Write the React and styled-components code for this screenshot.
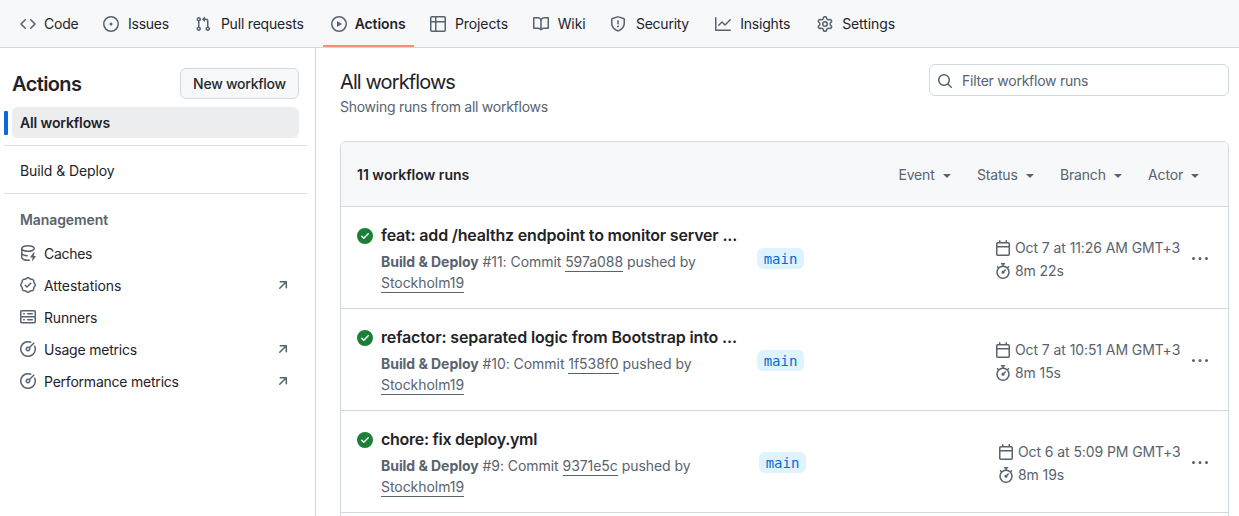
import React from 'react';
import styled, { createGlobalStyle } from 'styled-components';

const color = {
  fg: '#1f2328',
  muted: '#59636e',
  border: '#d1d9e0',
  subtle: '#f6f8fa',
  accent: '#0969da',
  success: '#1a7f37',
};

const paths = {
  code: 'm11.28 3.22 4.25 4.25a.75.75 0 0 1 0 1.06l-4.25 4.25a.749.749 0 0 1-1.275-.326.749.749 0 0 1 .215-.734L13.94 8l-3.72-3.72a.749.749 0 0 1 .326-1.275.749.749 0 0 1 .734.215Zm-6.56 0a.751.751 0 0 1 1.042.018.751.751 0 0 1 .018 1.042L2.06 8l3.72 3.72a.749.749 0 0 1-.326 1.275.749.749 0 0 1-.734-.215L.47 8.53a.75.75 0 0 1 0-1.06Z',
  issue: 'M8 9.5a1.5 1.5 0 1 0 0-3 1.5 1.5 0 0 0 0 3ZM8 0a8 8 0 1 1 0 16A8 8 0 0 1 8 0ZM1.5 8a6.5 6.5 0 1 0 13 0 6.5 6.5 0 0 0-13 0Z',
  pull: 'M1.5 3.25a2.25 2.25 0 1 1 3 2.122v5.256a2.251 2.251 0 1 1-1.5 0V5.372A2.25 2.25 0 0 1 1.5 3.25Zm5.677-.177L9.573.677A.25.25 0 0 1 10 .854V2.5h1A2.5 2.5 0 0 1 13.5 5v5.628a2.251 2.251 0 1 1-1.5 0V5a1 1 0 0 0-1-1h-1v1.646a.25.25 0 0 1-.427.177L7.177 3.427a.25.25 0 0 1 0-.354ZM3.75 2.5a.75.75 0 1 0 0 1.5.75.75 0 0 0 0-1.5Zm0 9.5a.75.75 0 1 0 0 1.5.75.75 0 0 0 0-1.5Zm8.25.75a.75.75 0 1 0 1.5 0 .75.75 0 0 0-1.5 0Z',
  play: 'M8 0a8 8 0 1 1 0 16A8 8 0 0 1 8 0ZM1.5 8a6.5 6.5 0 1 0 13 0 6.5 6.5 0 0 0-13 0Zm4.879-2.773 4.264 2.559a.25.25 0 0 1 0 .428l-4.264 2.559A.25.25 0 0 1 6 10.559V5.442a.25.25 0 0 1 .379-.215Z',
  table: 'M0 1.75C0 .784.784 0 1.75 0h12.5C15.216 0 16 .784 16 1.75v12.5A1.75 1.75 0 0 1 14.25 16H1.75A1.75 1.75 0 0 1 0 14.25ZM6.5 6.5v8h7.75a.25.25 0 0 0 .25-.25V6.5Zm8-1.5V1.75a.25.25 0 0 0-.25-.25H6.5V5Zm-13 1.5v7.75c0 .138.112.25.25.25H5v-8ZM5 5V1.5H1.75a.25.25 0 0 0-.25.25V5Z',
  book: 'M0 1.75A.75.75 0 0 1 .75 1h4.253c1.227 0 2.317.59 3 1.501A3.743 3.743 0 0 1 11.006 1h4.245a.75.75 0 0 1 .75.75v10.5a.75.75 0 0 1-.75.75h-4.507a2.25 2.25 0 0 0-1.591.659l-.622.621a.75.75 0 0 1-1.06 0l-.622-.621A2.25 2.25 0 0 0 5.258 13H.75a.75.75 0 0 1-.75-.75Zm7.251 10.324.004-5.073-.002-2.253A2.25 2.25 0 0 0 5.003 2.5H1.5v9h3.757a3.75 3.75 0 0 1 1.994.574ZM8.755 4.75l-.004 7.322a3.752 3.752 0 0 1 1.992-.572H14.5v-9h-3.495a2.25 2.25 0 0 0-2.25 2.25Z',
  shield: 'M7.467.133a1.748 1.748 0 0 1 1.066 0l5.25 1.68A1.75 1.75 0 0 1 15 3.48V7c0 1.566-.32 3.182-1.303 4.682-.983 1.498-2.585 2.813-5.032 3.855a1.697 1.697 0 0 1-1.33 0c-2.447-1.042-4.049-2.357-5.032-3.855C1.32 10.182 1 8.566 1 7V3.48a1.755 1.755 0 0 1 1.217-1.667Zm.61 1.429a.25.25 0 0 0-.153 0l-5.25 1.68a.25.25 0 0 0-.174.238V7c0 1.358.275 2.666 1.057 3.86.784 1.194 2.121 2.34 4.366 3.297a.196.196 0 0 0 .154 0c2.245-.956 3.582-2.104 4.366-3.298C13.225 9.666 13.5 8.36 13.5 7V3.48a.251.251 0 0 0-.174-.237l-5.25-1.68ZM8.75 4.75v3a.75.75 0 0 1-1.5 0v-3a.75.75 0 0 1 1.5 0ZM9 10.5a1 1 0 1 1-2 0 1 1 0 0 1 2 0Z',
  graph: 'M1.5 1.75V13.5h13.75a.75.75 0 0 1 0 1.5H.75a.75.75 0 0 1-.75-.75V1.75a.75.75 0 0 1 1.5 0Zm14.28 2.53-5.25 5.25a.75.75 0 0 1-1.06 0L7 7.06 4.28 9.78a.751.751 0 0 1-1.042-.018.751.751 0 0 1-.018-1.042l3.25-3.25a.75.75 0 0 1 1.06 0L10 7.94l4.72-4.72a.751.751 0 0 1 1.042.018.751.751 0 0 1 .018 1.042Z',
  gear: 'M8 0a8.2 8.2 0 0 1 .701.031C9.444.095 9.99.645 10.16 1.29l.288 1.107c.018.066.079.158.212.224.231.114.454.243.668.386.123.082.233.09.299.071l1.103-.303c.644-.176 1.392.021 1.82.63.27.385.506.792.704 1.218.315.675.111 1.422-.364 1.891l-.814.806c-.049.048-.098.147-.088.294.016.257.016.515 0 .772-.01.147.038.246.088.294l.814.806c.475.469.679 1.216.364 1.891a7.977 7.977 0 0 1-.704 1.217c-.428.61-1.176.807-1.82.63l-1.102-.302c-.067-.019-.177-.011-.3.071a5.909 5.909 0 0 1-.668.386c-.133.066-.194.158-.211.224l-.29 1.106c-.168.646-.715 1.196-1.458 1.26a8.006 8.006 0 0 1-1.402 0c-.743-.064-1.289-.614-1.458-1.26l-.289-1.106c-.018-.066-.079-.158-.212-.224a5.738 5.738 0 0 1-.668-.386c-.123-.082-.233-.09-.299-.071l-1.103.303c-.644.176-1.392-.021-1.82-.63a8.12 8.12 0 0 1-.704-1.218c-.315-.675-.111-1.422.363-1.891l.815-.806c.05-.048.098-.147.088-.294a6.214 6.214 0 0 1 0-.772c.01-.147-.038-.246-.088-.294l-.815-.806C.635 6.045.431 5.298.746 4.623a7.92 7.92 0 0 1 .704-1.217c.428-.61 1.176-.807 1.82-.63l1.102.302c.067.019.177.011.3-.071.214-.143.437-.272.668-.386.133-.066.194-.158.211-.224l.29-1.106C6.009.645 6.556.095 7.299.03 7.53.01 7.764 0 8 0Zm-.571 1.525c-.036.003-.108.036-.137.146l-.289 1.105c-.147.561-.549.967-.998 1.189-.173.086-.34.183-.5.29-.417.278-.97.423-1.529.27l-1.103-.303c-.109-.03-.175.016-.195.045-.22.312-.412.644-.573.99-.014.031-.021.11.059.19l.815.806c.411.406.562.957.53 1.456a4.709 4.709 0 0 0 0 .582c.032.499-.119 1.05-.53 1.456l-.815.806c-.081.08-.073.159-.059.19.162.346.353.677.573.989.02.03.085.076.195.046l1.102-.303c.56-.153 1.113-.008 1.53.27.161.107.328.204.501.29.447.222.85.629.997 1.189l.289 1.105c.029.109.101.143.137.146a6.6 6.6 0 0 0 1.142 0c.036-.003.108-.036.137-.146l.289-1.105c.147-.561.549-.967.998-1.189.173-.086.34-.183.5-.29.417-.278.97-.423 1.529-.27l1.103.303c.109.029.175-.016.195-.045.22-.313.411-.644.573-.99.014-.031.021-.11-.059-.19l-.815-.806c-.411-.406-.562-.957-.53-1.456a4.709 4.709 0 0 0 0-.582c-.032-.499.119-1.05.53-1.456l.815-.806c.081-.08.073-.159.059-.19a6.464 6.464 0 0 0-.573-.989c-.02-.03-.085-.076-.195-.046l-1.102.303c-.56.153-1.113.008-1.53-.27a4.44 4.44 0 0 0-.501-.29c-.447-.222-.85-.629-.997-1.189l-.289-1.105c-.029-.11-.101-.143-.137-.146a6.6 6.6 0 0 0-1.142 0ZM11 8a3 3 0 1 1-6 0 3 3 0 0 1 6 0ZM9.5 8a1.5 1.5 0 1 0-3.001.001A1.5 1.5 0 0 0 9.5 8Z',
  search: 'M10.68 11.74a6 6 0 0 1-7.922-8.982 6 6 0 0 1 8.982 7.922l3.04 3.04a.749.749 0 0 1-.326 1.275.749.749 0 0 1-.734-.215ZM11.5 7a4.499 4.499 0 1 0-8.997 0A4.499 4.499 0 0 0 11.5 7Z',
  caret: 'm4.427 7.427 3.396 3.396a.25.25 0 0 0 .354 0l3.396-3.396A.25.25 0 0 0 11.396 7H4.604a.25.25 0 0 0-.177.427Z',
  check: 'M8 16A8 8 0 1 1 8 0a8 8 0 0 1 0 16Zm3.78-9.72a.751.751 0 0 0-.018-1.042.751.751 0 0 0-1.042-.018L6.75 9.19 5.28 7.72a.751.751 0 0 0-1.042.018.751.751 0 0 0-.018 1.042l2 2a.75.75 0 0 0 1.06 0Z',
  calendar: 'M4.75 0a.75.75 0 0 1 .75.75V2h5V.75a.75.75 0 0 1 1.5 0V2h1.25c.966 0 1.75.784 1.75 1.75v10.5A1.75 1.75 0 0 1 13.25 16H2.75A1.75 1.75 0 0 1 1 14.25V3.75C1 2.784 1.784 2 2.75 2H4V.75A.75.75 0 0 1 4.75 0ZM2.5 7.5v6.75c0 .138.112.25.25.25h10.5a.25.25 0 0 0 .25-.25V7.5Zm10.75-4H2.75a.25.25 0 0 0-.25.25V6h11V3.75a.25.25 0 0 0-.25-.25Z',
  stopwatch: 'M5.75.75A.75.75 0 0 1 6.5 0h3a.75.75 0 0 1 0 1.5h-.75v1l-.001.041a6.724 6.724 0 0 1 3.464 1.435l.007-.006.75-.75a.749.749 0 0 1 1.275.326.749.749 0 0 1-.215.734l-.75.75-.006.007a6.75 6.75 0 1 1-10.548 0L2.72 5.03l-.75-.75a.751.751 0 0 1 .018-1.042.751.751 0 0 1 1.042-.018l.75.75.007.006A6.72 6.72 0 0 1 7.25 2.541V1.5H6.5a.75.75 0 0 1-.75-.75ZM8 14.5a5.25 5.25 0 1 0-.001-10.501A5.25 5.25 0 0 0 8 14.5Zm.389-6.7 1.33-1.33a.75.75 0 1 1 1.061 1.06L9.45 8.861A1.503 1.503 0 0 1 8 10.75a1.499 1.499 0 1 1 .389-2.95Z',
  kebab: 'M8 9a1.5 1.5 0 1 0 0-3 1.5 1.5 0 0 0 0 3ZM1.5 9a1.5 1.5 0 1 0 0-3 1.5 1.5 0 0 0 0 3Zm13 0a1.5 1.5 0 1 0 0-3 1.5 1.5 0 0 0 0 3Z',
  cache: 'M2.5 5.724V8c0 .248.238.7 1.169 1.159.874.43 2.144.745 3.62.822a.75.75 0 1 1-.078 1.498c-1.622-.085-3.102-.432-4.204-.975a5.565 5.565 0 0 1-.507-.28V12.5c0 .133.058.318.282.551.227.237.591.483 1.101.707 1.015.447 2.47.742 4.117.742.406 0 .802-.018 1.183-.052a.751.751 0 1 1 .134 1.494C8.89 15.98 8.45 16 8 16c-1.805 0-3.475-.32-4.721-.869-.623-.274-1.173-.619-1.579-1.041-.408-.425-.7-.964-.7-1.59v-9c0-.626.292-1.165.7-1.591.406-.42.956-.766 1.579-1.04C4.525.32 6.195 0 8 0c1.806 0 3.476.32 4.721.869.623.274 1.173.619 1.579 1.041.408.425.7.964.7 1.59 0 .626-.292 1.165-.7 1.591-.406.42-.956.766-1.578 1.04C11.475 6.68 9.805 7 8 7c-1.805 0-3.475-.32-4.721-.869a6.15 6.15 0 0 1-.779-.407Zm0-2.224c0 .133.058.318.282.551.227.237.591.483 1.101.707C4.898 5.205 6.353 5.5 8 5.5c1.646 0 3.101-.295 4.118-.742.508-.224.873-.471 1.1-.708.224-.232.282-.417.282-.55 0-.133-.058-.318-.282-.551-.227-.237-.591-.483-1.101-.707C11.102 1.795 9.647 1.5 8 1.5c-1.646 0-3.101.295-4.118.742-.508.224-.873.471-1.1.708-.224.232-.282.417-.282.55ZM14.49 7.582a.375.375 0 0 0-.66-.313l-3.625 4.625a.375.375 0 0 0 .295.606h2.127l-.619 2.922a.375.375 0 0 0 .666.304l3.125-4.125A.375.375 0 0 0 15.5 11h-1.778l.769-3.418Z',
  verified: 'm9.585.52.929.68c.153.112.331.186.518.215l1.138.175a2.678 2.678 0 0 1 2.24 2.24l.174 1.139c.029.187.103.365.215.518l.68.928a2.677 2.677 0 0 1 0 3.17l-.68.928a1.174 1.174 0 0 0-.215.518l-.175 1.138a2.678 2.678 0 0 1-2.241 2.241l-1.138.175a1.17 1.17 0 0 0-.518.215l-.928.68a2.677 2.677 0 0 1-3.17 0l-.928-.68a1.174 1.174 0 0 0-.518-.215L3.83 14.41a2.678 2.678 0 0 1-2.24-2.24l-.175-1.138a1.17 1.17 0 0 0-.215-.518l-.68-.928a2.677 2.677 0 0 1 0-3.17l.68-.928c.112-.153.186-.331.215-.518l.175-1.14a2.678 2.678 0 0 1 2.24-2.24l1.139-.175c.187-.029.365-.103.518-.215l.928-.68a2.677 2.677 0 0 1 3.17 0ZM7.303 1.728l-.927.68a2.67 2.67 0 0 1-1.18.489l-1.137.174a1.179 1.179 0 0 0-.987.987l-.174 1.136a2.677 2.677 0 0 1-.489 1.18l-.68.928a1.18 1.18 0 0 0 0 1.394l.68.927c.256.348.424.753.489 1.18l.174 1.137c.078.509.478.909.987.987l1.136.174a2.67 2.67 0 0 1 1.18.489l.928.68c.414.305.979.305 1.394 0l.927-.68a2.67 2.67 0 0 1 1.18-.489l1.137-.174a1.18 1.18 0 0 0 .987-.987l.174-1.136a2.67 2.67 0 0 1 .489-1.18l.68-.928a1.176 1.176 0 0 0 0-1.394l-.68-.927a2.686 2.686 0 0 1-.489-1.18l-.174-1.137a1.179 1.179 0 0 0-.987-.987l-1.136-.174a2.677 2.677 0 0 1-1.18-.489l-.928-.68a1.176 1.176 0 0 0-1.394 0ZM11.28 6.78l-3.75 3.75a.75.75 0 0 1-1.06 0L4.72 8.78a.751.751 0 0 1 .018-1.042.751.751 0 0 1 1.042-.018L7 8.94l3.22-3.22a.751.751 0 0 1 1.042.018.751.751 0 0 1 .018 1.042Z',
  server: 'M1.75 1h12.5c.966 0 1.75.784 1.75 1.75v4c0 .372-.116.717-.314 1 .198.283.314.628.314 1v4a1.75 1.75 0 0 1-1.75 1.75H1.75A1.75 1.75 0 0 1 0 12.75v-4c0-.358.109-.707.314-1a1.739 1.739 0 0 1-.314-1v-4C0 1.784.784 1 1.75 1ZM1.5 2.75v4c0 .138.112.25.25.25h12.5a.25.25 0 0 0 .25-.25v-4a.25.25 0 0 0-.25-.25H1.75a.25.25 0 0 0-.25.25Zm.25 5.75a.25.25 0 0 0-.25.25v4c0 .138.112.25.25.25h12.5a.25.25 0 0 0 .25-.25v-4a.25.25 0 0 0-.25-.25ZM7 4.75A.75.75 0 0 1 7.75 4h4.5a.75.75 0 0 1 0 1.5h-4.5A.75.75 0 0 1 7 4.75ZM7.75 10h4.5a.75.75 0 0 1 0 1.5h-4.5a.75.75 0 0 1 0-1.5ZM3 4.75A.75.75 0 0 1 3.75 4h.5a.75.75 0 0 1 0 1.5h-.5A.75.75 0 0 1 3 4.75ZM3.75 10h.5a.75.75 0 0 1 0 1.5h-.5a.75.75 0 0 1 0-1.5Z',
  meter: 'M8 1.5a6.5 6.5 0 1 0 6.016 4.035.75.75 0 0 1 1.388-.57 8 8 0 1 1-4.37-4.37.75.75 0 0 1-.569 1.389A6.473 6.473 0 0 0 8 1.5Zm6.28.22a.75.75 0 0 1 0 1.06l-4.063 4.064a2.5 2.5 0 1 1-1.06-1.06L13.22 1.72a.75.75 0 0 1 1.06 0ZM7 8a1 1 0 1 0 2 0 1 1 0 0 0-2 0Z',
  arrow: 'M4.53 4.75A.75.75 0 0 1 5.28 4h6.01a.75.75 0 0 1 .75.75v6.01a.75.75 0 0 1-1.5 0v-4.2l-5.26 5.261a.749.749 0 0 1-1.275-.326.749.749 0 0 1 .215-.734L9.48 5.5h-4.2a.75.75 0 0 1-.75-.75Z',
};

const GlobalStyle = createGlobalStyle`
  *, *::before, *::after { box-sizing: border-box; }
  body {
    margin: 0;
    background: #fff;
    color: ${color.fg};
    font: 400 14px/21px Inter, "Liberation Sans", sans-serif;
    overflow: hidden;
  }
  h1, h2, h3, p, ul { margin: 0; padding: 0; }
  a { color: inherit; text-decoration: none; }
`;

const Svg = styled.svg`
  flex: none;
  display: block;
  fill: ${(p) => p.$color || color.muted};
`;

function Icon({ name, fill }) {
  return (
    <Svg width="16" height="16" viewBox="0 0 16 16" $color={fill} aria-hidden="true">
      <path d={paths[name]} />
    </Svg>
  );
}

const Page = styled.div`
  display: flex;
  flex-direction: column;
  height: 516px;
  overflow: hidden;
`;

const Nav = styled.nav`
  display: flex;
  gap: 8px;
  flex: none;
  height: 48px;
  padding: 0 12px;
  background: ${color.subtle};
  border-bottom: 1px solid ${color.border};
`;

const Tab = styled.a`
  display: flex;
  align-items: center;
  gap: 8px;
  padding: 2px 8px 0;
  border-bottom: 2px solid ${(p) => (p.$active ? '#fd8c73' : 'transparent')};
  font-weight: ${(p) => (p.$active ? 600 : 400)};
`;

const TabLabel = styled.span`
  width: ${(p) => p.$width}px;
  padding-left: ${(p) => p.$inset || 0}px;
  white-space: nowrap;
  letter-spacing: ${(p) => p.$track || 0}px;
`;

const Body = styled.div`
  display: flex;
  flex: 1;
  min-height: 0;
`;

const Sidebar = styled.aside`
  flex: none;
  width: 316px;
  padding: 20px 8px 0 4px;
  border-right: 1px solid ${color.border};
`;

const SidebarHead = styled.div`
  display: flex;
  align-items: center;
  justify-content: space-between;
  height: 31px;
  margin: 0 8px 8px;
`;

const SidebarTitle = styled.h2`
  font-size: 20px;
  line-height: 30px;
  font-weight: 600;
  letter-spacing: -0.6px;
`;

const NewButton = styled.button`
  height: 31px;
  width: 119px;
  padding: 0;
  border: 1px solid ${color.border};
  border-radius: 6px;
  background: ${color.subtle};
  color: #25292e;
  font: 500 14px/20px Inter, "Liberation Sans", sans-serif;
  letter-spacing: -0.25px;
  white-space: nowrap;
`;

const SelectedRow = styled.div`
  display: flex;
  align-items: center;
`;

const SelectedBar = styled.span`
  width: 4px;
  height: 24px;
  border-radius: 1px;
  background: ${color.accent};
  margin-right: 4px;
`;

const SelectedLink = styled.a`
  flex: 1;
  height: 31px;
  margin-right: 8px;
  padding: 5px 8px;
  border-radius: 6px;
  background: #ecedef;
  font-weight: 600;
  letter-spacing: -0.13px;
`;

const Divider = styled.hr`
  height: 1px;
  margin: 7px 0;
  border: 0;
  background: #dde1e5;
`;

const SideLink = styled.a`
  display: flex;
  align-items: center;
  gap: 8px;
  height: 32px;
  margin: 0 8px;
  padding: 0 8px;
`;

const SideLabel = styled.span`
  flex: 1;
  letter-spacing: ${(p) => p.$track}px;
`;

const WorkflowLink = styled(SideLink)`
  height: 33px;
  padding-top: 2px;
  letter-spacing: -0.1px;
`;

const GroupTitle = styled.h3`
  margin: 15px 16px 7px;
  font-size: 14px;
  line-height: 21px;
  font-weight: 600;
  color: ${color.muted};
  letter-spacing: -0.1px;
`;

const Main = styled.main`
  flex: 1;
  min-width: 0;
  padding: 16px 10px 0 24px;
`;

const PageHead = styled.header`
  display: flex;
  justify-content: space-between;
  height: 77px;
`;

const PageTitle = styled.h1`
  padding-top: 3px;
  font-size: 20px;
  line-height: 30px;
  font-weight: 400;
  letter-spacing: -0.9px;
`;

const PageSub = styled.p`
  color: ${color.muted};
  line-height: 20px;
  letter-spacing: -0.26px;
`;

const SearchBox = styled.div`
  display: flex;
  align-items: center;
  gap: 9px;
  width: 300px;
  height: 32px;
  padding: 1px 7px 0;
  border: 1px solid ${color.border};
  border-radius: 6px;
  color: ${color.muted};
  letter-spacing: -0.25px;
`;

const Panel = styled.section`
  height: 480px;
  border: 1px solid ${color.border};
  border-radius: 6px;
  overflow: hidden;
`;

const PanelHead = styled.div`
  display: flex;
  align-items: center;
  height: 64px;
  padding: 1px 25px 0 16px;
  background: ${color.subtle};
`;

const RunCount = styled.strong`
  flex: 1;
  font-weight: 600;
`;

const Filters = styled.div`
  display: flex;
  gap: 22.3px;
`;

const Filter = styled.span`
  display: flex;
  align-items: center;
  gap: 4px;
  color: ${color.muted};
  letter-spacing: -0.17px;
`;

const Run = styled.article`
  display: flex;
  height: 102px;
  padding: 0 16px;
  border-top: 1px solid ${color.border};
`;

const RunStatus = styled.div`
  width: 24px;
  padding-top: 21px;
`;

const RunText = styled.div`
  width: 360px;
  padding-top: 16px;
  color: ${color.muted};
`;

const RunTitle = styled.h3`
  margin-bottom: 4px;
  font-size: 16px;
  line-height: 24px;
  font-weight: 600;
  color: ${color.fg};
  white-space: nowrap;
  letter-spacing: ${(p) => p.$track}px;
`;

const RunMeta = styled.p`
  width: 340px;
  letter-spacing: -0.05px;
`;

const Underlined = styled.a`
  padding-bottom: 1px;
  border-bottom: 1px solid ${color.muted};
`;

const BranchCell = styled.div`
  flex: 1;
  padding: 41px 0 0 ${(p) => p.$offset}px;
`;

const Branch = styled.a`
  display: block;
  height: 21px;
  width: 47px;
  border-radius: 6px;
  background: #ddf4ff;
  color: ${color.accent};
  font: 14px/23px "DejaVu Sans Mono", monospace;
  text-align: center;
`;

const Timing = styled.div`
  display: flex;
  flex-direction: column;
  gap: 2px;
  width: ${(p) => p.$width}px;
  padding-top: 30px;
  color: ${color.muted};
  letter-spacing: -0.09px;
`;

const TimeLine = styled.span`
  display: flex;
  align-items: center;
  gap: 4px;
  white-space: nowrap;
`;

const More = styled.div`
  padding: 44px 4px 0 11px;
`;

const tabs = [
  { icon: 'code', label: 'Code', width: 35, track: -0.2 },
  { icon: 'issue', label: 'Issues', width: 43.7, track: -0.25, inset: 1 },
  { icon: 'pull', label: 'Pull requests', width: 88, track: -0.2, inset: 2.2 },
  { icon: 'play', label: 'Actions', width: 51.3, track: -0.1, active: true },
  { icon: 'table', label: 'Projects', width: 54.7, track: -0.1, inset: 1 },
  { icon: 'book', label: 'Wiki', width: 29.3, track: -0.1, inset: 1 },
  { icon: 'shield', label: 'Security', width: 57, track: -0.25, inset: 2 },
  { icon: 'graph', label: 'Insights', width: 54, track: -0.2, inset: 1.2 },
  { icon: 'gear', label: 'Settings', width: 56, track: -0.1, inset: 1.2 },
];

const management = [
  { icon: 'cache', label: 'Caches', track: -0.3 },
  { icon: 'verified', label: 'Attestations', track: -0.07, external: true },
  { icon: 'server', label: 'Runners', track: -0.2 },
  { icon: 'meter', label: 'Usage metrics', track: -0.2, external: true },
  { icon: 'meter', label: 'Performance metrics', track: -0.22, external: true },
];

const runs = [
  { title: 'feat: add /healthz endpoint to monitor server ...', track: -0.18, number: 11, commit: '597a088', date: 'Oct 7 at 11:26 AM GMT+3', time: '8m 22s', offset: 16, width: 186 },
  { title: 'refactor: separated logic from Bootstrap into ...', track: -0.13, number: 10, commit: '1f538f0', date: 'Oct 7 at 10:51 AM GMT+3', time: '8m 15s', offset: 16, width: 186 },
  { title: 'chore: fix deploy.yml', track: -0.28, number: 9, commit: '9371e5c', date: 'Oct 6 at 5:09 PM GMT+3', time: '8m 19s', offset: 18, width: 183 },
  { title: '', number: 8 },
];

export default function App() {
  return (
    <>
      <GlobalStyle />
      <Page>
        <Nav>
          {tabs.map((t) => (
            <Tab key={t.label} $active={t.active}>
              <Icon name={t.icon} />
              <TabLabel $width={t.width} $track={t.track} $inset={t.inset}>{t.label}</TabLabel>
            </Tab>
          ))}
        </Nav>
        <Body>
          <Sidebar>
            <SidebarHead>
              <SidebarTitle>Actions</SidebarTitle>
              <NewButton>New workflow</NewButton>
            </SidebarHead>
            <SelectedRow>
              <SelectedBar />
              <SelectedLink>All workflows</SelectedLink>
            </SelectedRow>
            <Divider />
            <WorkflowLink>Build &amp; Deploy</WorkflowLink>
            <Divider />
            <GroupTitle>Management</GroupTitle>
            {management.map((m) => (
              <SideLink key={m.label}>
                <Icon name={m.icon} />
                <SideLabel $track={m.track}>{m.label}</SideLabel>
                {m.external && <Icon name="arrow" />}
              </SideLink>
            ))}
          </Sidebar>
          <Main>
            <PageHead>
              <div>
                <PageTitle>All workflows</PageTitle>
                <PageSub>Showing runs from all workflows</PageSub>
              </div>
              <SearchBox>
                <Icon name="search" />
                <span>Filter workflow runs</span>
              </SearchBox>
            </PageHead>
            <Panel>
              <PanelHead>
                <RunCount>11 workflow runs</RunCount>
                <Filters>
                  {['Event', 'Status', 'Branch', 'Actor'].map((f) => (
                    <Filter key={f}>
                      {f}
                      <Icon name="caret" />
                    </Filter>
                  ))}
                </Filters>
              </PanelHead>
              {runs.map((r) => (
                <Run key={r.number}>
                  {r.title && (
                    <>
                      <RunStatus>
                        <Icon name="check" fill={color.success} />
                      </RunStatus>
                      <RunText>
                        <RunTitle $track={r.track}>{r.title}</RunTitle>
                        <RunMeta>
                          <b>Build &amp; Deploy</b> #{r.number}: Commit <Underlined>{r.commit}</Underlined> pushed by{' '}
                          <br />
                          <Underlined>Stockholm19</Underlined>
                        </RunMeta>
                      </RunText>
                      <BranchCell $offset={r.offset}>
                        <Branch>main</Branch>
                      </BranchCell>
                      <Timing $width={r.width}>
                        <TimeLine>
                          <Icon name="calendar" />
                          {r.date}
                        </TimeLine>
                        <TimeLine>
                          <Icon name="stopwatch" />
                          {r.time}
                        </TimeLine>
                      </Timing>
                      <More>
                        <Icon name="kebab" />
                      </More>
                    </>
                  )}
                </Run>
              ))}
            </Panel>
          </Main>
        </Body>
      </Page>
    </>
  );
}
